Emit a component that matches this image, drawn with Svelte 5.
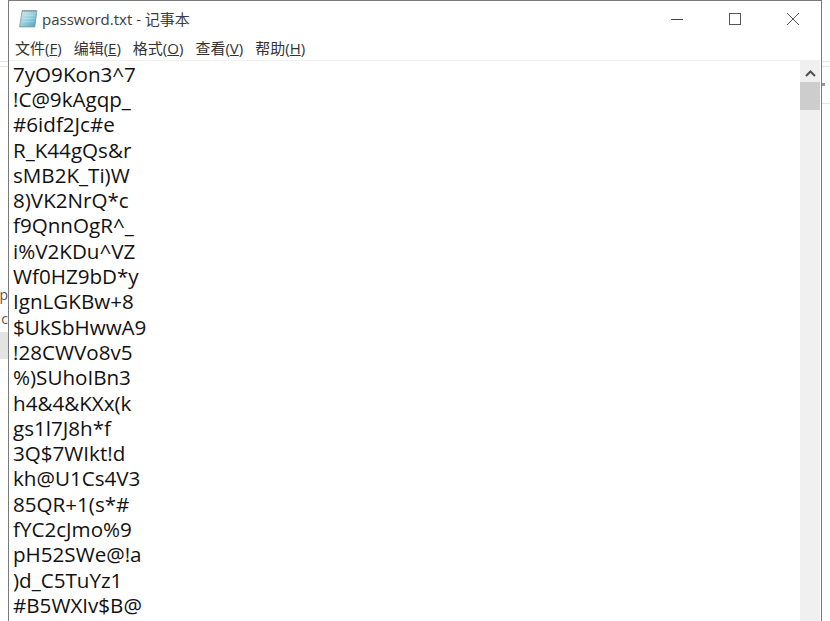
<script lang="ts">
  const menus = [
    { label: "文件", key: "F" },
    { label: "编辑", key: "E" },
    { label: "格式", key: "O" },
    { label: "查看", key: "V" },
    { label: "帮助", key: "H" }
  ];

  const lines = [
    "7yO9Kon3^7", "!C@9kAgqp_", "#6idf2Jc#e", "R_K44gQs&r", "sMB2K_Ti)W", "8)VK2NrQ*c",
    "f9QnnOgR^_", "i%V2KDu^VZ", "Wf0HZ9bD*y", "IgnLGKBw+8", "$UkSbHwwA9", "!28CWVo8v5",
    "%)SUhoIBn3", "h4&4&KXx(k", "gs1l7J8h*f", "3Q$7WIkt!d", "kh@U1Cs4V3", "85QR+1(s*#",
    "fYC2cJmo%9", "pH52SWe@!a", ")d_C5TuYz1", "#B5WXIv$B@"
  ];
</script>

<div class="page">
  <div class="behind left">
    <div class="rule first"></div>
    <div class="rule"></div>
    <span class="peek one">p</span>
    <span class="peek two">c</span>
    <div class="block"></div>
  </div>

  <div class="window">
    <header class="titlebar">
      <svg class="app-icon" width="21" height="21" viewBox="0 0 20 20" aria-hidden="true">
        <defs>
          <linearGradient id="pad" x1="0" y1="0" x2="1" y2="1">
            <stop offset="0" stop-color="#d8eef3" />
            <stop offset="0.55" stop-color="#8fcbdc" />
            <stop offset="1" stop-color="#4f9db5" />
          </linearGradient>
        </defs>
        <path d="M4 2.5H18L16 18H1.5Z" fill="url(#pad)" stroke="#7d9aa6" stroke-width="0.8" />
        <path d="M4 2.8H18" stroke="#8a8f94" stroke-width="2" stroke-dasharray="1 1" />
        <path d="M5.4 7H15.5M5 10H15M4.6 13H14.6" stroke="#ffffff" stroke-opacity="0.3" stroke-width="0.8" />
      </svg>
      <span class="title">password.txt - 记事本</span>
      <div class="controls">
        <button type="button" class="control" aria-label="Minimize">
          <svg width="14" height="14" viewBox="0 0 14 14" fill="none" stroke="#444" stroke-width="1"><path d="M1 7.5H13" /></svg>
        </button>
        <button type="button" class="control" aria-label="Maximize">
          <svg width="14" height="14" viewBox="0 0 14 14" fill="none" stroke="#555" stroke-width="1"><rect x="1.5" y="1.5" width="11" height="11" /></svg>
        </button>
        <button type="button" class="control" aria-label="Close">
          <svg width="14" height="14" viewBox="0 0 14 14" fill="none" stroke="#555" stroke-width="1"><path d="M1 1L13 13M13 1L1 13" /></svg>
        </button>
      </div>
    </header>

    <nav class="menubar">
      {#each menus as menu}
        <span class="menu">{menu.label}(<u>{menu.key}</u>)</span>
      {/each}
    </nav>

    <div class="body">
      <div class="text">
        {#each lines as line}
          <div class="line">{line}</div>
        {/each}
      </div>
      <div class="scrollbar">
        <svg class="arrow" width="11" height="7" viewBox="0 0 11 7" fill="none" stroke="#505050" stroke-width="2"><path d="M1 6L5.5 1.5L10 6" /></svg>
        <div class="thumb"></div>
      </div>
    </div>
  </div>

  <div class="behind right">
    <div class="rule first"></div>
    <div class="rule"></div>
    <span class="dot"></span>
    <div class="rule last"></div>
  </div>
</div>

<style>
  :global(body) {
    background: #ffffff;
    overflow: hidden;
  }

  .page {
    display: flex;
    width: 830px;
    height: 621px;
    overflow: hidden;
    background: #ffffff;
    font-family: "Open Sans", "Noto Sans CJK SC", sans-serif;
  }

  .behind {
    position: relative;
    flex: none;
    overflow: hidden;
  }

  .left {
    width: 8px;
  }

  .right {
    flex: 1;
  }

  .rule {
    height: 1px;
    margin-top: 4px;
    background: #e6e6e6;
  }

  .rule.first {
    margin-top: 61px;
  }

  .rule.last {
    margin-top: 36px;
  }

  .peek {
    position: absolute;
    right: 0;
    color: #555;
    font-size: 14px;
    line-height: 16px;
  }

  .peek.one {
    top: 287px;
  }

  .peek.two {
    top: 311px;
  }

  .block {
    position: absolute;
    top: 332px;
    left: 0;
    width: 8px;
    height: 27px;
    background: #e3e3e3;
  }

  .dot {
    position: absolute;
    top: 83px;
    left: 0;
    width: 3px;
    height: 3px;
    background: #999;
  }

  .window {
    display: flex;
    flex: none;
    flex-direction: column;
    box-sizing: border-box;
    width: 814px;
    height: 621px;
    background: #ffffff;
    border: 1px solid #7a7a7a;
    border-bottom: none;
    overflow: hidden;
  }

  .titlebar {
    display: flex;
    flex: none;
    align-items: center;
    height: 34px;
    padding-left: 9px;
  }

  .app-icon {
    flex: none;
    margin-right: 3px;
  }

  .title {
    color: #3c3c3c;
    font-size: 15px;
    white-space: nowrap;
  }

  .controls {
    display: flex;
    margin-left: auto;
    margin-right: -1px;
    padding-top: 2px;
  }

  .control {
    display: flex;
    align-items: center;
    justify-content: center;
    width: 58px;
    height: 34px;
    padding: 0;
    background: none;
    border: none;
  }

  .menubar {
    display: flex;
    flex: none;
    gap: 12px;
    height: 25px;
    align-items: center;
    padding-left: 6px;
    border-bottom: 1px solid #f0f0f0;
    color: #333;
    font-size: 15px;
  }

  .menu {
    white-space: nowrap;
  }

  .body {
    display: flex;
    flex: 1;
    min-height: 0;
  }

  .text {
    flex: 1;
    padding: 0.7px 0 0 4px;
    color: #111;
    font-size: 20.6px;
    line-height: 25.3px;
  }

  .line {
    white-space: pre;
  }

  .scrollbar {
    display: flex;
    flex: none;
    flex-direction: column;
    align-items: center;
    width: 20px;
    margin-right: 1px;
    background: #f0f0f0;
  }

  .arrow {
    margin: 9px 0 5px;
  }

  .thumb {
    align-self: stretch;
    height: 28px;
    background: #cdcdcd;
  }
</style>
